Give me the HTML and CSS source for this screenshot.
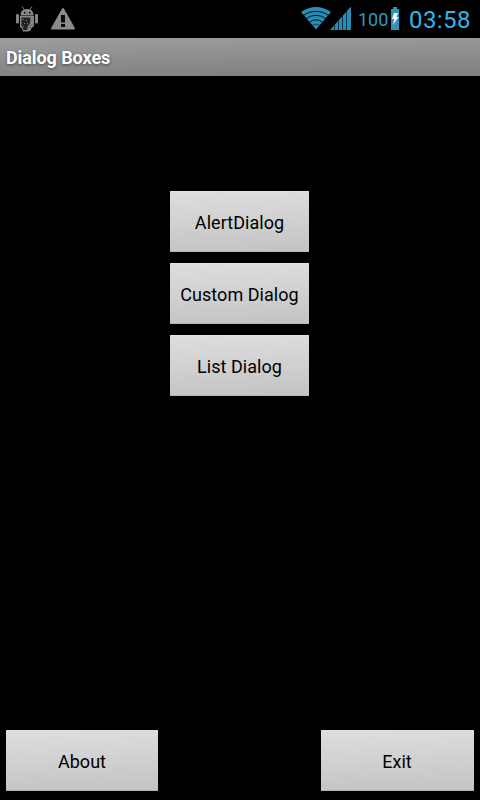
FILE: index.html
```html
<!DOCTYPE html>
<html lang="en">
<head>
<meta charset="utf-8">
<title>Dialog Boxes</title>
<link rel="stylesheet" href="styles.css">
</head>
<body>
<div class="screen">
  <header class="status-bar">
    <svg class="icon-android" width="24" height="26" viewBox="0 0 24 26">
      <g fill="#858585">
        <path d="M5.500 9.500C5.500 5 8 3 12 3s6.500 2 6.500 6.500z"/>
        <path d="M7 .5l2 3M17 .5l-2 3" stroke="#858585" stroke-width="1"/>
        <rect x="1" y="8" width="3" height="9.500" rx="1.200"/>
        <rect x="20" y="8" width="3" height="9.500" rx="1.200"/>
        <path d="M5 10h14v10l-2.500 2-1 2.500-2.500 1H8l-1-3-2-1.500z"/>
      </g>
      <path d="M6.500 11.500h9l-.5 6-2 2-1 4.500H8.500l-1-3-1-1z" fill="#222"/>
      <path d="M8 13h1v1H8zM11 14h1v1h-1zM9 17h1v1H9zM12 17h1v1h-1zM8 20h1v1H8z" fill="#777"/>
      <path d="M9 6h1.500v1.500H9zM14 6h1.500v1.500H14z" fill="#000"/>
      <path d="M14 20l4-2M13 22l3-1" stroke="#555" stroke-width=".6"/>
    </svg>
    <svg class="icon-warning" width="26" height="24" viewBox="0 0 26 24">
      <path d="M13 2L24 21.500H2z" fill="#8b8b8b" stroke="#8b8b8b" stroke-width="2" stroke-linejoin="round"/>
      <path d="M11 8h4v7.500h-4zM11 17h4v3h-4z" fill="#090909"/>
    </svg>
    <svg class="icon-wifi" width="32" height="24" viewBox="0 0 32 24">
      <path d="M1 6Q16-4 31 6L16 23.500z" fill="#278db5"/>
      <g fill="none" stroke="#001018" stroke-width="1">
        <path d="M3 9.500Q16 1 29 9.500"/>
        <path d="M5.500 13Q16 5.500 26.500 13"/>
        <path d="M9 16.500Q16 11 23 16.500"/>
        <path d="M12 19.500Q16 16.500 20 19.500" stroke-width=".6"/>
      </g>
    </svg>
    <svg class="icon-signal" width="22" height="24" viewBox="0 0 22 24">
      <path d="M0 24L21 .5V24z" fill="#278db5"/>
      <path d="M4.500 16v8M8.500 12v12M12.500 8v16M16.500 3v21" stroke="#001018" stroke-width=".7"/>
    </svg>
    <span class="level">100</span>
    <svg class="icon-battery" width="8" height="24" viewBox="0 0 8 24">
      <path d="M2 0h4v2h2v21H0V2h2z" fill="#2f94b8"/>
      <path d="M3 6h4L5.500 10H7.500L2 18l1.300-6H1z" fill="#eef9fc"/>
    </svg>
    <span class="clock">03:58</span>
  </header>
  <h1 class="title-bar">Dialog Boxes</h1>
  <main class="content">
    <button class="btn">AlertDialog</button>
    <button class="btn">Custom Dialog</button>
    <button class="btn">List Dialog</button>
  </main>
  <footer class="actions">
    <button class="btn btn-about">About</button>
    <button class="btn btn-exit">Exit</button>
  </footer>
</div>
</body>
</html>
```
FILE: styles.css
```css
* { box-sizing: border-box; }
body { margin: 0; background: #000; font-family: Roboto, sans-serif; }
.screen { width: 480px; height: 800px; display: flex; flex-direction: column; background: #000; overflow: hidden; }
.status-bar { height: 38px; flex: none; display: flex; align-items: flex-start; padding-left: 15px; color: #33b5e5; }
.status-bar svg { flex: none; display: block; }
.icon-android { margin-top: 6px; }
.icon-warning { margin: 7px 0 0 11px; }
.icon-wifi { margin: 6px 0 0 224px; }
.icon-signal { margin: 6px 0 0 -2px; }
.level { width: 31px; margin: 9px 0 0 6px; font-size: 18px; line-height: 22px; color: #2b9bc5; }
.icon-battery { margin: 7px 0 0 2px; }
.clock { margin: 5px 0 0 10px; font-size: 24px; line-height: 30px; letter-spacing: .4px; }
.title-bar { height: 38px; flex: none; margin: 0; padding: 1px 6px 0; font-size: 18px; line-height: 38px; font-weight: 700; letter-spacing: -.08px; color: #fff; text-shadow: 0 1px 3px #444; background: linear-gradient(179deg, #9d9d9d, #7e7e7e); }
.content { flex: 1; display: flex; flex-direction: column; align-items: center; gap: 11px; padding: 115px 1px 0 0; }
.btn { width: 139px; height: 61px; margin: 0; padding: 3px 0 0; border: 0; border-radius: 1px; font: 400 18px/22px Roboto, sans-serif; letter-spacing: .04px; color: #000; white-space: nowrap; background: linear-gradient(178deg, #dedede, #c3c3c3); box-shadow: inset 0 1px #e0e0e0, inset 0 -1px #b4b4b4; }
.actions { flex: none; display: flex; justify-content: space-between; padding: 0 6px 9px; }
.btn-about { width: 152px; }
.btn-exit { width: 153px; padding-right: 1px; }
```
